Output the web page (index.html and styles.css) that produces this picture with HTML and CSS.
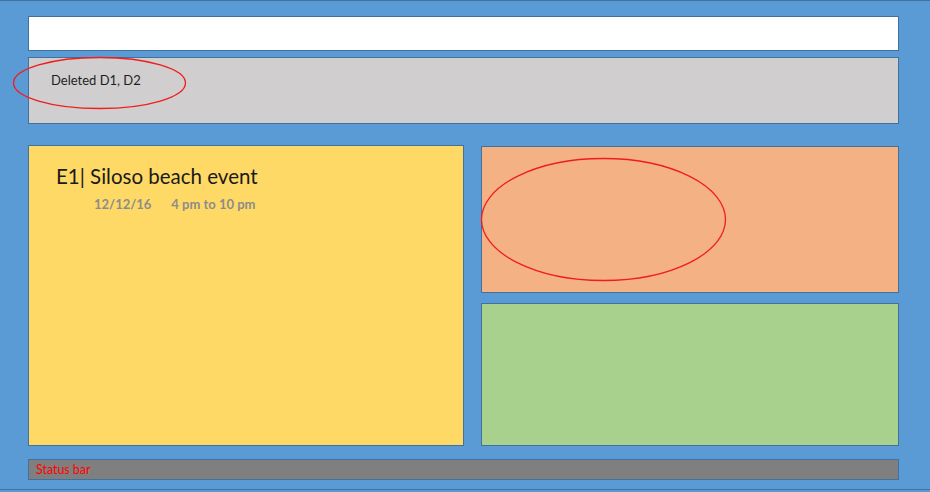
FILE: index.html
```html
<!DOCTYPE html>
<html>
<head>
<meta charset="utf-8">
<link rel="stylesheet" href="styles.css">
</head>
<body>
<div class="frame">
  <div class="command-box"></div>
  <div class="feedback">
    <span class="feedback-text">Deleted D1, D2</span>
    <svg class="ring ring-feedback" width="175" height="54" viewBox="0 0 175 54"><ellipse cx="87.5" cy="27" rx="86" ry="25.5" fill="none" stroke="#f01d1d" stroke-width="1.3"/></svg>
  </div>
  <div class="main">
    <div class="event-card">
      <div class="event-title">E1| Siloso beach event</div>
      <div class="event-meta"><span class="event-date">12/12/16</span><span class="event-time">4 pm to 10 pm</span></div>
    </div>
    <div class="side">
      <div class="panel panel-orange">
        <svg class="ring ring-panel" width="247" height="125" viewBox="0 0 247 125"><ellipse cx="123.5" cy="62.5" rx="122" ry="61" fill="none" stroke="#f01d1d" stroke-width="1.3"/></svg>
      </div>
      <div class="panel panel-green"></div>
    </div>
  </div>
  <div class="status-bar">Status bar</div>
</div>
</body>
</html>
```

FILE: styles.css
```css
html, body {
  margin: 0;
  padding: 0;
  background: #5b9bd5;
}
body {
  width: 930px;
  height: 492px;
  overflow: hidden;
  font-family: Lato, "Open Sans", sans-serif;
}
.frame {
  box-sizing: border-box;
  height: 490px;
  border-top: 1px solid #41719c;
  border-bottom: 1px solid #41719c;
  padding: 15px 31px 0 28px;
  display: flex;
  flex-direction: column;
}
.command-box {
  box-sizing: border-box;
  height: 35px;
  background: #ffffff;
  border: 1px solid #41719c;
}
.feedback {
  position: relative;
  box-sizing: border-box;
  margin-top: 6px;
  height: 67px;
  background: #d0cece;
  border: 1px solid #41719c;
  padding: 12px 0 0 22px;
  line-height: 17px;
}
.feedback-text {
  font-size: 13px;
  color: #1e1e1e;
}
.ring {
  position: absolute;
  pointer-events: none;
}
.ring-feedback {
  left: -17px;
  top: -2px;
}
.main {
  margin-top: 21px;
  height: 301px;
  display: flex;
  gap: 17px;
}
.event-card {
  box-sizing: border-box;
  width: 436px;
  background: #ffd966;
  border: 1px solid #41719c;
  padding: 18px 0 0 27px;
}
.event-title {
  font-size: 20.5px;
  color: #1a1a1a;
  line-height: 24px;
}
.event-meta {
  margin-top: 8px;
  padding-left: 38px;
  font-size: 13px;
  font-weight: bold;
  color: #8c8c8c;
  display: flex;
  gap: 20px;
}
.side {
  flex: 1;
  display: flex;
  flex-direction: column;
  gap: 10px;
  padding-top: 1px;
}
.panel {
  box-sizing: border-box;
  border: 1px solid #41719c;
}
.panel-orange {
  position: relative;
  height: 147px;
  background: #f4b183;
}
.panel-green {
  flex: 1;
  background: #a9d18e;
}
.ring-panel {
  left: -2px;
  top: 10px;
}
.status-bar {
  box-sizing: border-box;
  margin-top: 13px;
  height: 21px;
  background: #7f7f7f;
  border: 1px solid #41719c;
  color: #ff0000;
  font-size: 12.4px;
  line-height: 15px;
  padding: 2px 0 0 7px;
}
```
